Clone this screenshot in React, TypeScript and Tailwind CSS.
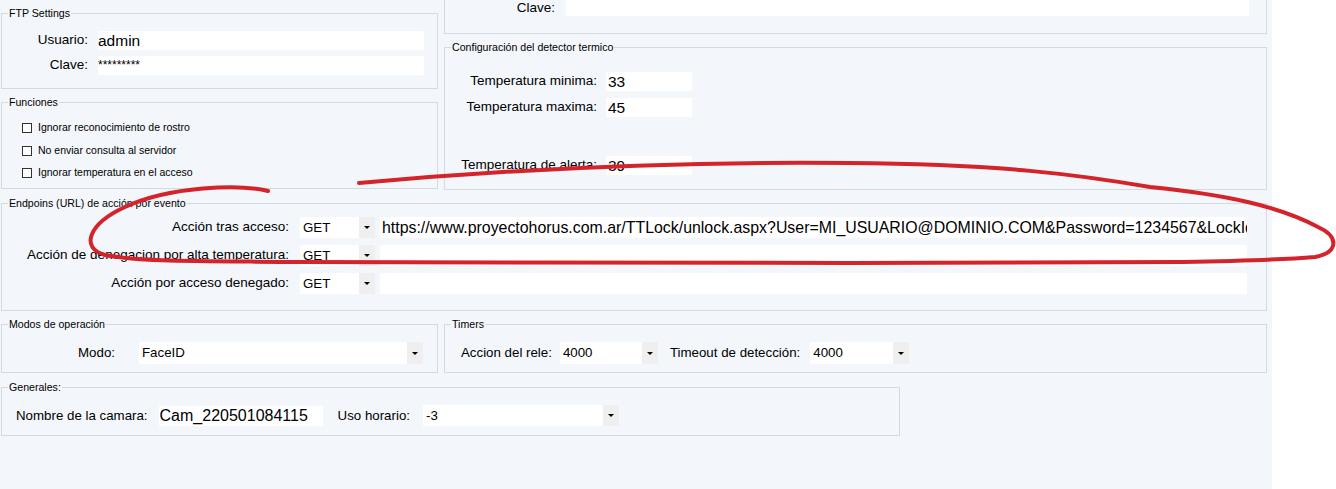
import React from "react";

const font = { fontFamily: '"Liberation Sans", Arial, sans-serif' };

function Group({ title, className, children }: { title: string; className: string; children?: React.ReactNode }) {
  return (
    <fieldset className={`border border-[#d5dae1] ${className}`}>
      <legend className="ml-[6px] px-[1px] text-[10.6px] leading-[13px] text-black">{title}</legend>
      {children}
    </fieldset>
  );
}

function Arrow() {
  return <span className="block w-0 h-0 border-x-[3px] border-x-transparent border-t-[3px] border-t-black" />;
}

function Combo({ value, className }: { value: string; className: string }) {
  return (
    <div className={`flex bg-white ${className}`}>
      <span className="flex-1 pl-[3px] flex items-center text-[13.3px]">{value}</span>
      <span className="w-[16px] bg-[#efefef] flex items-center justify-center">
        <Arrow />
      </span>
    </div>
  );
}

function Check({ label }: { label: string }) {
  return (
    <div className="flex items-center h-[22.5px] pl-[20px]">
      <span className="w-[10px] h-[10px] border border-[#333] bg-white" />
      <span className="ml-[6px] text-[10.5px]">{label}</span>
    </div>
  );
}

export default function App() {
  const endpoints = [
    {
      label: "Acción tras acceso:",
      url: "https://www.proyectohorus.com.ar/TTLock/unlock.aspx?User=MI_USUARIO@DOMINIO.COM&Password=1234567&LockId=1234",
    },
    { label: "Acción de denegacion por alta temperatura:", url: "" },
    { label: "Acción por acceso denegado:", url: "" },
  ];

  return (
    <div className="relative flex w-full h-[489px] bg-white text-black overflow-hidden" style={font}>
      <div className="w-[1272px] h-full bg-[#f3f6fa] pl-[1px]">
        {/* top row */}
        <div className="flex gap-[6px]">
          <div className="w-[437px]">
            <Group title="FTP Settings" className="mt-[7px] h-[82px] pt-[11px]">
              <div className="flex items-center h-[19px]">
                <span className="w-[86px] text-right text-[13.5px]">Usuario:</span>
                <div className="ml-[10px] w-[326px] h-[19px] bg-white text-[15.5px] leading-[19px]">admin</div>
              </div>
              <div className="flex items-center h-[19px] mt-[6px]">
                <span className="w-[86px] text-right text-[13.5px]">Clave:</span>
                <div className="ml-[10px] w-[326px] h-[19px] bg-white text-[12px] leading-[19px]">*********</div>
              </div>
            </Group>
            <Group title="Funciones" className="mt-[7px] h-[93px] pt-[8px]">
              <Check label="Ignorar reconocimiento de rostro" />
              <Check label="No enviar consulta al servidor" />
              <Check label="Ignorar temperatura en el acceso" />
            </Group>
          </div>

          <div className="w-[823px]">
            <div className="h-[34px] border-x border-b border-[#d5dae1] flex items-start">
              <span className="w-[110px] text-right text-[13.5px] leading-[16px]">Clave:</span>
              <div className="ml-[11px] w-[683px] h-[16px] bg-white" />
            </div>
            <Group title="Configuración del detector termico" className="mt-[7px] h-[149px] pt-[18px]">
              <div className="flex items-center h-[19px]">
                <span className="w-[152px] text-right text-[13.5px]">Temperatura minima:</span>
                <div className="ml-[9px] w-[86px] h-[19px] bg-white text-[15.5px] leading-[19px] pl-[2px]">33</div>
              </div>
              <div className="flex items-center h-[19px] mt-[7px]">
                <span className="w-[152px] text-right text-[13.5px]">Temperatura maxima:</span>
                <div className="ml-[9px] w-[86px] h-[19px] bg-white text-[15.5px] leading-[19px] pl-[2px]">45</div>
              </div>
              <div className="flex items-center h-[19px] mt-[39px]">
                <span className="w-[152px] text-right text-[13.5px]">Temperatura de alerta:</span>
                <div className="ml-[9px] w-[86px] h-[19px] bg-white text-[15.5px] leading-[19px] pl-[2px]">39</div>
              </div>
            </Group>
          </div>
        </div>

        {/* endpoints */}
        <Group title="Endpoins (URL) de acción por evento" className="mt-[7px] w-[1266px] h-[114px] pt-[7px]">
          {endpoints.map((e, i) => (
            <div key={i} className={`flex items-center h-[21px] ${i > 0 ? "mt-[7px]" : ""}`}>
              <span className="w-[287px] text-right text-[13.5px]">{e.label}</span>
              <Combo value="GET" className="ml-[11px] w-[75px] h-[21px]" />
              <div className="ml-[5px] w-[867px] h-[21px] bg-white text-[15.9px] leading-[21px] overflow-hidden whitespace-nowrap pl-[2px]">
                {e.url}
              </div>
            </div>
          ))}
        </Group>

        {/* modes + timers */}
        <div className="flex gap-[6px] mt-[7px]">
          <Group title="Modos de operación" className="w-[437px] h-[55px] pt-[11px]">
            <div className="flex items-center h-[22px]">
              <span className="w-[113px] text-right text-[13.3px]">Modo:</span>
              <Combo value="FaceID" className="ml-[24px] w-[284px] h-[22px]" />
            </div>
          </Group>
          <Group title="Timers" className="w-[823px] h-[55px] pt-[11px]">
            <div className="flex items-center h-[22px] pl-[16px]">
              <span className="text-[13.3px]">Accion del rele:</span>
              <Combo value="4000" className="ml-[8px] w-[98px] h-[22px]" />
              <span className="ml-[12px] text-[13.3px]">Timeout de detección:</span>
              <Combo value="4000" className="ml-[10px] w-[99px] h-[22px]" />
            </div>
          </Group>
        </div>

        {/* generales */}
        <Group title="Generales:" className="mt-[8px] w-[899px] h-[55px] pt-[11px]">
          <div className="flex items-center h-[21px] pl-[14px]">
            <span className="text-[13.3px]">Nombre de la camara:</span>
            <div className="ml-[11px] w-[164px] h-[20px] bg-white text-[16px] leading-[20px] pl-[1px]">Cam_220501084115</div>
            <span className="ml-[15px] text-[13.3px]">Uso horario:</span>
            <Combo value="-3" className="ml-[13px] w-[196px] h-[21px]" />
          </div>
        </Group>
      </div>

      {/* hand-drawn annotation */}
      <svg className="absolute inset-0 pointer-events-none" width="1336" height="489" viewBox="0 0 1336 489">
        <path
          d="M268,191 C240,184 170,186 125,207 C88,224 80,248 105,255 C140,262 200,261 300,262 L850,263 L1183,262 C1240,261 1290,259 1315,257 C1340,252 1338,236 1318,227 C1280,207 1230,195 1150,187 C1080,175 1000,164 850,163 C650,161 480,172 359,183"
          fill="none"
          stroke="#d4232a"
          strokeWidth="4"
          strokeLinecap="round"
          strokeLinejoin="round"
        />
      </svg>
    </div>
  );
}
